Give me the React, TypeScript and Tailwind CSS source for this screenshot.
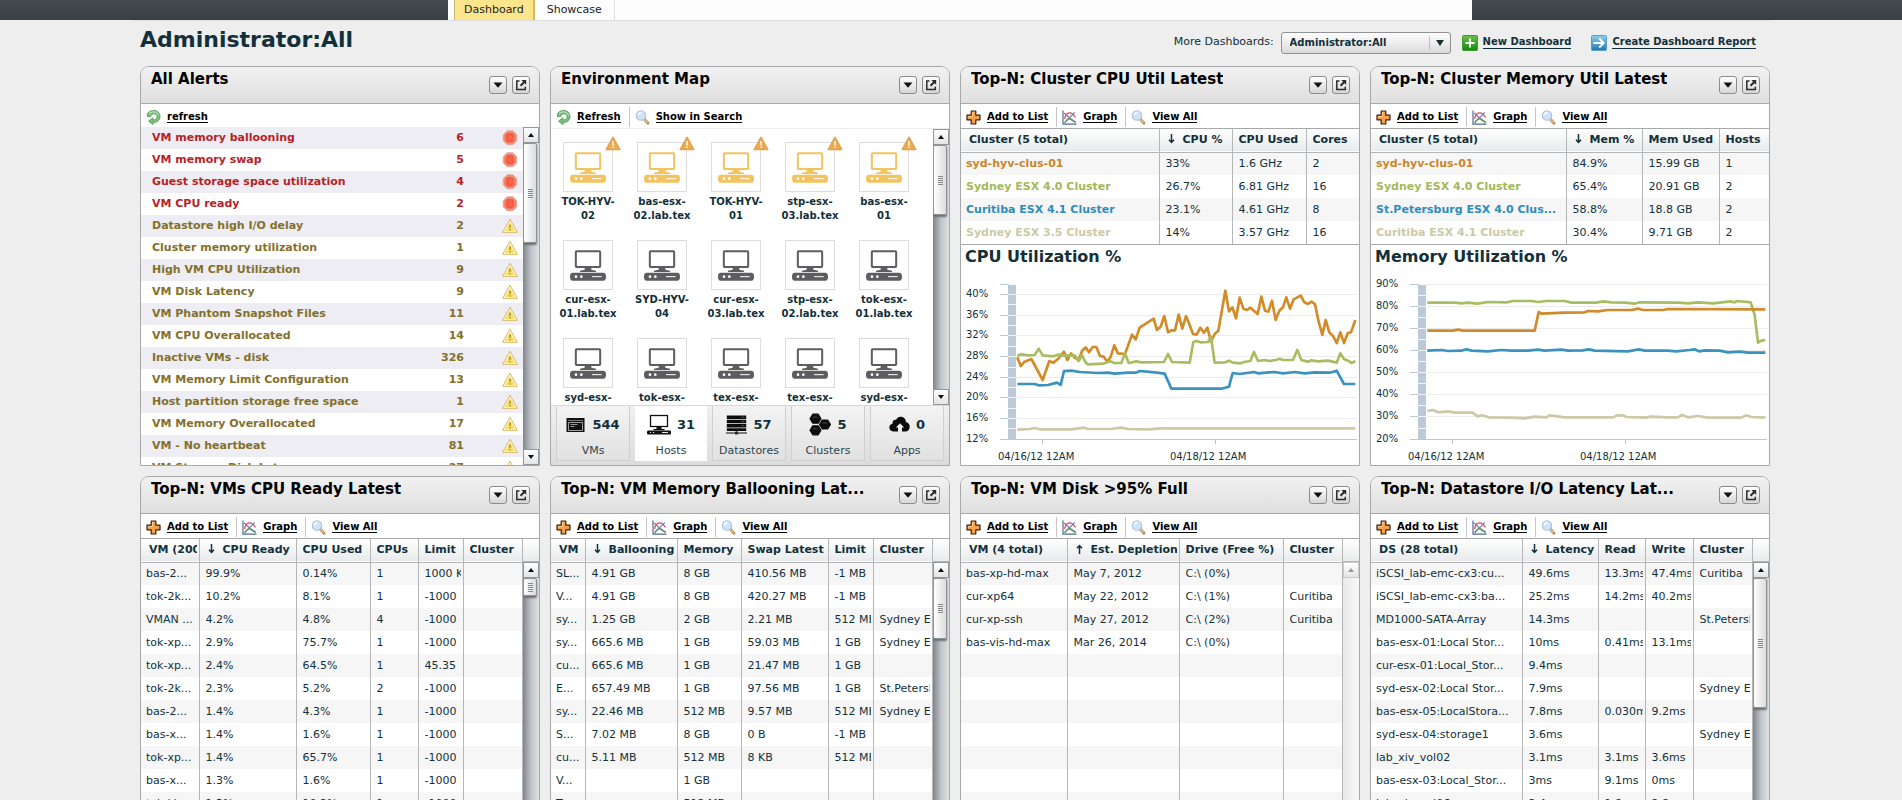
import React from "react";

/* ---------- Icons ---------- */

function RefreshIcon() {
  return (
    <svg width="15" height="15" viewBox="0 0 15 15" aria-hidden="true">
      <path
        d="M1.2 6.6 1.6 3.6C3 1.2 5.4.5 8 .5c3.4 0 6 2.600 6 6.100 0 3.500-2.400 5.600-5.600 5.900H6.900v2.200L2.600 11.200 6.900 7.800v2h1.200c1.700 0 3-1.300 3-3.100 0-1.700-1.300-2.900-3.100-2.900-1.800 0-2.800.9-3.200 2.800z"
        fill="#7cc07c"
        stroke="#4b9553"
        strokeWidth=".8"
        strokeLinejoin="round"
      />
      <path d="M3 3.600C4.300 2.300 6 1.800 8 1.900c2.300.1 4 1.500 4.500 3.600" fill="none" stroke="#c9ebc6" strokeWidth="1" />
    </svg>
  );
}

function SearchIcon() {
  return (
    <svg width="15" height="15" viewBox="0 0 15 15" aria-hidden="true">
      <path d="m9 8.800 4 4.500" stroke="#b98a5c" strokeWidth="2.800" strokeLinecap="round" />
      <path d="m9.300 9.100 3 3.300" stroke="#efc999" strokeWidth="1.100" strokeLinecap="round" />
      <circle cx="6" cy="5.500" r="4.700" fill="#cfe4f8" stroke="#a9c4e2" strokeWidth="1.100" />
      <path d="M3.300 5.200C3.600 3.500 4.800 2.600 6.500 2.700" stroke="#fff" strokeWidth="1.300" fill="none" />
    </svg>
  );
}

function PlusIcon() {
  return (
    <svg width="15" height="15" viewBox="0 0 15 15" aria-hidden="true">
      <path
        d="M5.200 1h4.600v4.200H14v4.600H9.800V14H5.200V9.800H1V5.200h4.200z"
        fill="#f6a04a"
        stroke="#3d1c05"
        strokeWidth="1.200"
        strokeLinejoin="round"
      />
      <path d="M6.500 6.500V2.400h1.200M2.400 7.700V6.500H6" stroke="#fcd09a" fill="none" />
    </svg>
  );
}

function GraphIcon() {
  return (
    <svg width="15" height="15" viewBox="0 0 15 15" aria-hidden="true">
      <path d="M1 .5v13.600h13.500" fill="none" stroke="#4f6a94" strokeWidth="1.200" />
      <path d="M2 3.200c3.500 1 5.500 7.800 11.800 8.600" fill="none" stroke="#9a7cb8" strokeWidth="1.400" />
      <path d="M2.600 8.800C4 2 9 .4 13.500 7.500" fill="none" stroke="#cf4f63" strokeWidth="1.300" />
      <path d="M2.500 12.800 12.800 2.300" fill="none" stroke="#7b79ad" strokeWidth="1.200" />
      <path d="M2.800 13C5 8 9 7 13.500 13" fill="none" stroke="#4fa05d" strokeWidth="1.200" />
    </svg>
  );
}

function CriticalIcon() {
  return (
    <svg width="16" height="16" viewBox="0 0 16 16" aria-hidden="true">
      <defs>
        <radialGradient id="critical">
          <stop offset="0" stopColor="#ff6a4a" />
          <stop offset=".65" stopColor="#f2583f" />
          <stop offset="1" stopColor="#ee8a76" />
        </radialGradient>
      </defs>
      <path d="M5.200.8h5.600l4 4v5.900l-4 4H5.200l-4-4V4.800z" fill="url(#critical)" stroke="#dcaba3" strokeWidth=".9" />
      <path d="M5.800 2.200h4.400l2.700 2.800v5.400l-2.700 2.800H5.800L3.100 10.400V5z" fill="none" stroke="#f7a593" strokeWidth=".9" />
    </svg>
  );
}

function WarningIcon() {
  return (
    <svg width="16" height="16" viewBox="0 0 16 16" aria-hidden="true">
      <path d="M8 1.200 15.400 14.300H.6z" fill="#fffbe6" stroke="#d8b565" strokeWidth="1" strokeLinejoin="round" />
      <path d="M8 4 13.200 13H2.800z" fill="#f7e06a" />
      <path d="M8 6.600v3.400M8 11v1.400" stroke="#b8902c" strokeWidth="1.500" />
    </svg>
  );
}

function BadgeIcon() {
  return (
    <svg width="16" height="15" viewBox="0 0 16 15" aria-hidden="true">
      <path d="M8 1.500 14.600 13.400H1.400z" fill="#efac4b" stroke="#e3a455" strokeWidth="1.800" strokeLinejoin="round" />
      <path d="M8 5v4.200M8 10.400v1.700" stroke="#fffaf0" strokeWidth="1.600" />
    </svg>
  );
}

function HostIcon({ color }: { color: string }) {
  return (
    <svg width="36" height="31" viewBox="0 0 108 93" aria-hidden="true">
      <rect x="17.500" y="4" width="73" height="47" rx="2" fill="#fff" stroke={color} strokeWidth="6" />
      <path d="M44 51h20v8l14 3v4H30v-4l14-3z" fill={color} />
      <path d="M8 68h92q8 0 8 12 0 12-8 12H8q-8 0-8-12 0-12 8-12z" fill={color} />
      <circle cx="18" cy="80" r="4" fill="#fff" />
      <circle cx="34" cy="80" r="4" fill="#fff" />
      <path d="M66 80h29" stroke="#fff" strokeWidth="3" />
    </svg>
  );
}

function VmsIcon() {
  return (
    <svg width="20" height="16" viewBox="0 0 20 16" aria-hidden="true">
      <rect x=".5" y="1" width="18" height="14" fill="#111" />
      <path d="M2 3.500h15" stroke="#777" />
      <path d="M2.500 5.500h14v8h-14z" fill="none" stroke="#ddd" strokeWidth=".7" />
      <path d="M4.500 7.500h7M4.500 9.500h4" stroke="#999" />
    </svg>
  );
}

function HostTabIcon() {
  return (
    <svg width="24" height="21" viewBox="0 0 24 21" aria-hidden="true">
      <rect x="3.500" y="1.500" width="17" height="11" fill="#fff" stroke="#111" strokeWidth="1.300" />
      <path d="M9.500 13h5v2h3v1.200h-11V15h3z" fill="#111" />
      <path d="M1 16.500h22q1 0 1 1.500v1q0 1.500-1 1.500H1q-1 0-1-1.500v-1q0-1.500 1-1.500z" fill="#111" />
      <path d="M3 18.500h1.200M6 18.500h1.200M15 18.500h6" stroke="#fff" strokeWidth=".9" />
    </svg>
  );
}

function DatastoresIcon() {
  return (
    <svg width="21" height="20" viewBox="0 0 21 20" aria-hidden="true">
      <path d="M.8.500h19.400v3.500H.8zM.8 4.800h19.400v3.500H.8zM.8 9.100h19.400v3.500H.8zM.8 13.300h19.400v2.700H.8z" fill="#0c0c0c" />
      <path d="M0 18h8M13 18h8M10.500 16v1" stroke="#555" strokeWidth="1.300" />
      <rect x="8.500" y="16.800" width="4" height="2.600" fill="#222" />
      <path d="M15.500 2.200h3M15.500 6.500h3M15.500 10.800h3" stroke="#666" strokeWidth=".8" />
    </svg>
  );
}

function ClustersIcon() {
  return (
    <svg width="22" height="23" viewBox="0 0 22 23" aria-hidden="true">
      <g fill="#0c0c0c" stroke="#0c0c0c" strokeWidth="1.200" strokeLinejoin="round">
        <path d="M3.800 1.200h5.400L12 5.700 9.200 10.200H3.800L1 5.700z" />
        <path d="M13.300 7h5.400l2.800 4.500-2.800 4.500h-5.400l-2.800-4.500z" />
        <path d="M3.800 12.800h5.400l2.800 4.500-2.800 4.500H3.800L1 17.300z" />
      </g>
      <path d="M4 4.200h4.500M4 15.800h4.500M13.500 10h4.500" stroke="#666" strokeWidth=".7" />
    </svg>
  );
}

function AppsIcon() {
  return (
    <svg width="21" height="17" viewBox="0 0 21 17" aria-hidden="true">
      <path
        d="M4.500 15.500C1.800 15.500.3 13.800.3 11.600c0-2 1.400-3.600 3.200-3.900C3.200 5 5 3.300 7.200 3.800 8 1.800 9.700.8 11.700.8c3 0 5.200 2.200 5.200 5.200 2.400.5 3.800 2.400 3.800 4.700 0 2.700-1.900 4.800-4.600 4.800h-3.100v-4h2.100L11 7.200l-4.100 4.300H9v4z"
        fill="#0c0c0c"
      />
    </svg>
  );
}

function TileIcon({ kind }: { kind: "new" | "report" }) {
  const isNew = kind === "new";
  return (
    <svg width="16" height="16" viewBox="0 0 16 16" aria-hidden="true">
      <defs>
        <linearGradient id={`tile-${kind}`} x1="0" y1="0" x2="0" y2="1">
          <stop offset="0" stopColor={isNew ? "#6cc04a" : "#8fd0f0"} />
          <stop offset="1" stopColor={isNew ? "#138a12" : "#2277ae"} />
        </linearGradient>
      </defs>
      <rect x=".5" y=".5" width="15" height="15" rx="1" fill={`url(#tile-${kind})`} stroke={isNew ? "#3c9a30" : "#5a9dc4"} />
      {isNew ? (
        <path d="M8 3.500v9M3.500 8h9" stroke="#fff" strokeWidth="1.800" />
      ) : (
        <path d="M2.500 8h9.500M8.300 3.500 12.700 8l-4.400 4.500" fill="none" stroke="#fff" strokeWidth="1.800" />
      )}
    </svg>
  );
}

/* ---------- Shared pieces ---------- */

function HeaderButton({ label, children }: { label: string; children: React.ReactNode }) {
  return (
    <button
      type="button"
      aria-label={label}
      className="flex size-[18px] items-center justify-center rounded-[3px] border border-[#8a8c8e] bg-linear-to-b from-white to-[#d6d6d6]"
    >
      {children}
    </button>
  );
}

function Panel({ title, children }: { title: string; children: React.ReactNode }) {
  return (
    <section className="flex h-[400px] min-w-0 flex-col overflow-hidden rounded-t-[9px] border border-[#a6a8aa] bg-white">
      <header className="flex h-[37px] shrink-0 items-start justify-between border-b border-[#a6a8aa] bg-linear-to-b from-[#f1f1f1] to-[#e0dfe0] pt-[3px] pr-[9px] pl-[10px]">
        <h2 className="truncate text-[15px] leading-[18px] font-bold text-black">{title}</h2>
        <div className="flex shrink-0 gap-[5px] pt-1.5">
          <HeaderButton label="Widget menu">
            <svg width="10" height="6" viewBox="0 0 10 6" aria-hidden="true">
              <path d="M.5.500h9L5 5.800z" fill="#111" />
            </svg>
          </HeaderButton>
          <HeaderButton label="Open in new window">
            <svg width="12" height="12" viewBox="0 0 12 12" aria-hidden="true">
              <path d="M4.500 2H1.800v8.500h8.500V7.800" fill="none" stroke="#2b2b2b" strokeWidth="1.500" />
              <path d="M6.300.9H11.200V5.800L9.500 4.200 6.200 7.500 4.800 6.100 8.100 2.700z" fill="#2b2b2b" />
            </svg>
          </HeaderButton>
        </div>
      </header>
      {children}
    </section>
  );
}

interface Tool {
  icon: React.ReactNode;
  label: string;
}

const listTools: Tool[] = [
  { icon: <PlusIcon />, label: "Add to List" },
  { icon: <GraphIcon />, label: "Graph" },
  { icon: <SearchIcon />, label: "View All" },
];

function Toolbar({ tools }: { tools: Tool[] }) {
  return (
    <div className="flex h-6 shrink-0 items-center pt-0.5">
      {tools.map((tool, i) => (
        <a
          key={tool.label}
          href="#"
          className={`flex h-5 items-center gap-[6px] pr-2 pl-[5px] text-[10px] leading-4 font-bold text-black ${
            i > 0 ? "border-l border-[#c4c6c8]" : ""
          }`}
        >
          {tool.icon}
          <span className="border-b border-black leading-[11px]">{tool.label}</span>
        </a>
      ))}
    </div>
  );
}

function Scrollbar({ thumb }: { thumb?: string }) {
  const active = Boolean(thumb);
  const cap = `flex h-4 w-full shrink-0 items-center justify-center border bg-linear-to-b from-white to-[#e4e4e4] ${
    active ? "border-[#94979a]" : "border-[#c9c9c9]"
  }`;
  const fill = active ? "#111" : "#999";
  return (
    <div
      className={`flex w-4 flex-1 flex-col overflow-hidden ${
        active ? "bg-linear-to-r from-[#7f858a] via-[#bfc5ca] to-[#dfe2e4]" : "bg-linear-to-r from-[#e9e9e9] to-[#f8f8f8]"
      }`}
    >
      <button type="button" aria-label="Scroll up" className={cap}>
        <svg width="6" height="4" viewBox="0 0 6 4" aria-hidden="true">
          <path d="M3 0 6 4H0z" fill={fill} />
        </svg>
      </button>
      <div className="flex flex-1 flex-col">
        {thumb && (
          <div
            className={`flex w-[14px] flex-col items-center justify-center gap-px rounded-[2px] border border-[#8f9396] bg-linear-to-r from-white to-[#dcdcdc] shadow-[0_2px_2px_#6a6f73] ${thumb}`}
          >
            <span className="h-px w-[5px] bg-[#888]" />
            <span className="h-px w-[5px] bg-[#888]" />
            <span className="h-px w-[5px] bg-[#888]" />
            <span className="h-px w-[5px] bg-[#888]" />
            <span className="h-px w-[5px] bg-[#888]" />
          </div>
        )}
      </div>
      <button type="button" aria-label="Scroll down" className={cap}>
        <svg width="6" height="4" viewBox="0 0 6 4" aria-hidden="true">
          <path d="M3 4 6 0H0z" fill={fill} />
        </svg>
      </button>
    </div>
  );
}

interface DataTableProps {
  columns: { label: string; width: string; sort?: "up" | "down" }[];
  rows: string[][];
  nameColors?: string[];
  thumb?: string;
  scroll?: boolean;
}

function SortArrow({ dir }: { dir: "up" | "down" }) {
  return (
    <svg width="7" height="10" viewBox="0 0 7 10" className="mr-2 ml-0.5 inline-block align-[-1px]" aria-hidden="true">
      <path
        d={dir === "down" ? "M3.500 0v8M1 5.800l2.500 2.700L6 5.800" : "M3.500 10V2M1 4.200l2.500-2.700L6 4.200"}
        fill="none"
        stroke="#12303a"
        strokeWidth="1.500"
      />
    </svg>
  );
}

function DataTable({ columns, rows, nameColors, thumb, scroll }: DataTableProps) {
  return (
    <div className={`flex min-h-0 border-t border-[#a6a8aa] ${scroll ? "flex-1" : "shrink-0 border-b"}`}>
      <div className="min-w-0 flex-1 overflow-hidden">
        <table className="w-full table-fixed border-collapse text-[11px] leading-[22px] text-[#12303a]">
          <colgroup>
            {columns.map((c) => (
              <col key={c.label} className={c.width} />
            ))}
          </colgroup>
          <thead>
            <tr className="h-[23px] border-b border-[#b4b6b8] bg-linear-to-b from-white to-[#e9eaeb]">
              {columns.map((c, i) => (
                <th
                  key={c.label}
                  scope="col"
                  className={`p-0 text-left font-bold ${i > 0 ? "border-l border-[#b4b6b8]" : ""}`}
                >
                  <div className={`mr-0.5 overflow-hidden whitespace-nowrap ${i > 0 ? "ml-[6px]" : "ml-2"}`}>
                    {c.sort && <SortArrow dir={c.sort} />}
                    {c.label}
                  </div>
                </th>
              ))}
            </tr>
          </thead>
          <tbody>
            {rows.map((row, r) => (
              <tr key={r} className={`h-[23px] ${r % 2 === 0 ? "bg-[#f6f6f6]" : "bg-white"}`}>
                {columns.map((c, i) => (
                  <td key={c.label} className={`p-0 ${i > 0 ? "border-l border-[#b4b6b8]" : ""}`}>
                    <div
                      className={`mr-0.5 h-[22px] overflow-hidden whitespace-nowrap ${i > 0 ? "ml-[6px]" : "ml-[5px]"} ${
                        i === 0 && nameColors ? `font-bold ${nameColors[r]}` : ""
                      }`}
                    >
                      {row[i]}
                    </div>
                  </td>
                ))}
              </tr>
            ))}
          </tbody>
        </table>
      </div>
      {scroll && (
        <div className="flex w-[17px] shrink-0 flex-col border-l border-[#b4b6b8]">
          <div className="h-[23px] shrink-0 border-b border-[#b4b6b8] bg-linear-to-b from-white to-[#e9eaeb]" />
          <Scrollbar thumb={thumb} />
        </div>
      )}
    </div>
  );
}

/* ---------- Charts ---------- */

interface ChartProps {
  title: string;
  ticks: { label: string; y: number }[];
  cells: number[];
  topTick?: boolean;
  series: { color: string; points: string }[];
}

function UtilizationChart({ title, ticks, cells, topTick, series }: ChartProps) {
  return (
    <>
      <h3 className="h-[22px] shrink-0 pl-1 text-[16px] leading-[23px] font-bold text-[#12303a]">{title}</h3>
      <svg viewBox="0 1 398 198" className="min-h-0 w-full flex-1" role="img" aria-label={title}>
        {ticks.map((t) => (
          <g key={t.label}>
            <path d={`M55 ${t.y}.5H396`} stroke="#ececec" />
            <path d={`M39 ${t.y}.5H48`} stroke="#b9c9d2" />
            <text x="5" y={t.y + 3} fontSize="10" fill="#12303a">
              {t.label}
            </text>
          </g>
        ))}
        {topTick && <path d="M39 18.500H48" stroke="#b9c9d2" />}
        <rect x="47" y="19" width="8" height="154" fill="#bccad8" />
        {cells.map((y) => (
          <path key={y} d={`M47 ${y}.500H55`} stroke="#f2f5f8" />
        ))}
        <path d="M39 173.500H396M81.500 173v5M254.500 173v5" fill="none" stroke="#b9c9d2" />
        <text x="37" y="194" fontSize="10" fill="#12303a">
          04/16/12 12AM
        </text>
        <text x="209" y="194" fontSize="10" fill="#12303a">
          04/18/12 12AM
        </text>
        <g transform="scale(.33333) translate(-19 -618)">
          {series.map((s) => (
            <polyline
              key={s.color}
              points={s.points}
              fill="none"
              stroke={s.color}
              strokeWidth="8"
              strokeLinejoin="round"
              strokeLinecap="butt"
            />
          ))}
        </g>
      </svg>
    </>
  );
}

const cpuSeries = [
  {
    color: "#d28b26",
    points:
      "188,892 198,918 210,905 230,897 240,915 264,960 284,903 296,908 310,897 328,875 338,900 349,880 360,893 372,900 382,873 393,862 403,877 414,861 425,861 436,888 447,890 458,905 468,890 479,856 490,880 511,882 532,824 543,838 555,803 597,776 607,810 618,800 629,768 640,817 650,811 661,811 672,764 683,806 694,768 705,795 715,822 726,824 737,803 748,818 758,803 769,845 780,822 791,812 812,692 823,754 833,742 844,775 855,713 866,746 877,750 887,743 909,762 920,710 931,752 941,755 952,722 963,780 974,752 985,742 995,712 1006,746 1017,718 1038,707 1049,727 1060,732 1071,725 1081,733 1092,785 1103,825 1113,780 1124,817 1135,828 1146,849 1157,817 1168,849 1179,820 1189,817 1202,780",
  },
  {
    color: "#a8bd61",
    points:
      "188,888 200,883 220,886 240,885 252,866 264,886 295,889 310,884 328,887 360,886 372,903 382,886 393,908 400,913 445,911 468,904 478,909 500,909 511,880 522,909 545,904 560,907 628,906 640,882 652,906 705,908 716,846 726,843 737,847 760,846 769,830 780,908 812,907 823,902 834,908 857,910 868,906 887,903 898,876 910,903 930,900 945,903 963,900 975,896 985,900 1015,900 1028,870 1040,900 1060,905 1070,901 1090,904 1120,902 1146,908 1157,880 1168,897 1180,902 1190,909 1202,904",
  },
  {
    color: "#3a92bf",
    points:
      "188,972 240,972 252,976 280,975 307,968 318,975 328,933 350,932 375,936 430,939 460,938 480,941 520,938 545,938 555,933 600,937 630,941 650,986 800,986 823,980 834,939 855,942 898,936 910,940 960,936 985,940 1020,936 1050,940 1080,937 1125,938 1146,932 1168,972 1202,972",
  },
  {
    color: "#cbc9a6",
    points:
      "188,1109 225,1107 240,1104 255,1108 350,1108 388,1103 400,1107 470,1107 497,1103 520,1107 580,1108 620,1105 1202,1105",
  },
];

const memorySeries = [
  {
    color: "#a8bd61",
    points:
      "188,728 270,728 290,730 310,728 338,731 370,726 425,727 445,723 500,723 520,726 545,723 600,723 620,728 695,728 715,724 740,727 780,728 810,731 825,727 940,728 970,730 1000,727 1045,730 1098,724 1110,727 1118,723 1158,727 1170,765 1180,848 1190,842 1202,840",
  },
  {
    color: "#cf8a2c",
    points:
      "188,812 265,812 280,809 295,812 510,812 522,756 530,761 600,758 660,757 670,753 700,754 730,750 800,750 822,746 835,750 895,750 910,747 1202,748",
  },
  {
    color: "#3a92bf",
    points:
      "188,872 230,870 250,873 290,872 305,868 322,872 370,874 410,870 440,872 490,872 520,869 540,872 590,869 610,872 655,871 672,868 690,872 790,874 822,868 840,872 910,872 935,874 975,870 990,868 1003,874 1020,871 1065,872 1090,877 1125,875 1150,878 1202,878",
  },
  {
    color: "#cbc9a6",
    points:
      "188,1053 205,1050 220,1057 252,1054 270,1058 325,1058 338,1069 352,1066 372,1072 440,1073 480,1075 510,1070 545,1072 555,1066 600,1072 745,1072 757,1066 775,1066 785,1071 840,1073 860,1070 910,1072 940,1072 952,1065 970,1072 1000,1068 1030,1073 1130,1073 1145,1066 1160,1071 1202,1073",
  },
];

/* ---------- Data ---------- */

const alerts: [string, number, "critical" | "warning"][] = [
  ["VM memory ballooning", 6, "critical"],
  ["VM memory swap", 5, "critical"],
  ["Guest storage space utilization", 4, "critical"],
  ["VM CPU ready", 2, "critical"],
  ["Datastore high I/O delay", 2, "warning"],
  ["Cluster memory utilization", 1, "warning"],
  ["High VM CPU Utilization", 9, "warning"],
  ["VM Disk Latency", 9, "warning"],
  ["VM Phantom Snapshot Files", 11, "warning"],
  ["VM CPU Overallocated", 14, "warning"],
  ["Inactive VMs - disk", 326, "warning"],
  ["VM Memory Limit Configuration", 13, "warning"],
  ["Host partition storage free space", 1, "warning"],
  ["VM Memory Overallocated", 17, "warning"],
  ["VM - No heartbeat", 81, "warning"],
  ["VM Storage Disk Latency", 27, "warning"],
];

const hosts: [string, string, boolean][] = [
  ["TOK-HYV-", "02", true],
  ["bas-esx-", "02.lab.tex", true],
  ["TOK-HYV-", "01", true],
  ["stp-esx-", "03.lab.tex", true],
  ["bas-esx-", "01", true],
  ["cur-esx-", "01.lab.tex", false],
  ["SYD-HYV-", "04", false],
  ["cur-esx-", "03.lab.tex", false],
  ["stp-esx-", "02.lab.tex", false],
  ["tok-esx-", "01.lab.tex", false],
  ["syd-esx-", "04.lab.tex", false],
  ["tok-esx-", "02.lab.tex", false],
  ["tex-esx-", "01.lab.tex", false],
  ["tex-esx-", "02.lab.tex", false],
  ["syd-esx-", "03.lab.tex", false],
];

const envTabs = [
  { label: "VMs", count: 544, icon: <VmsIcon /> },
  { label: "Hosts", count: 31, icon: <HostTabIcon /> },
  { label: "Datastores", count: 57, icon: <DatastoresIcon /> },
  { label: "Clusters", count: 5, icon: <ClustersIcon /> },
  { label: "Apps", count: 0, icon: <AppsIcon /> },
];

const nameColors = ["text-[#c9862b]", "text-[#a3b85a]", "text-[#2f8cbb]", "text-[#cbc9a6]"];

const cpuReady = [
  ["bas-2...", "99.9%", "0.14%", "1", "1000 KHz", ""],
  ["tok-2k...", "10.2%", "8.1%", "1", "-1000", ""],
  ["VMAN ...", "4.2%", "4.8%", "4", "-1000", ""],
  ["tok-xp...", "2.9%", "75.7%", "1", "-1000", ""],
  ["tok-xp...", "2.4%", "64.5%", "1", "45.35", ""],
  ["tok-2k...", "2.3%", "5.2%", "2", "-1000", ""],
  ["bas-2...", "1.4%", "4.3%", "1", "-1000", ""],
  ["bas-x...", "1.4%", "1.6%", "1", "-1000", ""],
  ["tok-xp...", "1.4%", "65.7%", "1", "-1000", ""],
  ["bas-x...", "1.3%", "1.6%", "1", "-1000", ""],
  ["tok-ki...", "1.3%", "10.2%", "1", "-1000", ""],
  ["tok-xp...", "1.2%", "3.1%", "1", "-1000", ""],
  ["bas-x...", "1.2%", "2.4%", "1", "-1000", ""],
];

const ballooning = [
  ["SL...", "4.91 GB", "8 GB", "410.56 MB", "-1 MB", ""],
  ["V...", "4.91 GB", "8 GB", "420.27 MB", "-1 MB", ""],
  ["sy...", "1.25 GB", "2 GB", "2.21 MB", "512 MB", "Sydney ESX 4.0 Cluster"],
  ["sy...", "665.6 MB", "1 GB", "59.03 MB", "1 GB", "Sydney ESX 4.0 Cluster"],
  ["cu...", "665.6 MB", "1 GB", "21.47 MB", "1 GB", ""],
  ["E...", "657.49 MB", "1 GB", "97.56 MB", "1 GB", "St.Petersburg ESX 4.0"],
  ["sy...", "22.46 MB", "512 MB", "9.57 MB", "512 MB", "Sydney ESX 4.0 Cluster"],
  ["S...", "7.02 MB", "8 GB", "0 B", "-1 MB", ""],
  ["cu...", "5.11 MB", "512 MB", "8 KB", "512 MB", ""],
  ["V...", "", "1 GB", "", "", ""],
  ["T...", "", "512 MB", "", "", ""],
  ["V...", "", "1 GB", "", "", ""],
  ["T...", "", "1 GB", "", "", ""],
];

const diskFull = [
  ["bas-xp-hd-max", "May 7, 2012", "C:\\ (0%)", ""],
  ["cur-xp64", "May 22, 2012", "C:\\ (1%)", "Curitiba"],
  ["cur-xp-ssh", "May 27, 2012", "C:\\ (2%)", "Curitiba"],
  ["bas-vis-hd-max", "Mar 26, 2014", "C:\\ (0%)", ""],
  ...Array.from({ length: 9 }, () => ["", "", "", ""]),
];

const datastores = [
  ["iSCSI_lab-emc-cx3:cu...", "49.6ms", "13.3ms", "47.4ms", "Curitiba"],
  ["iSCSI_lab-emc-cx3:ba...", "25.2ms", "14.2ms", "40.2ms", ""],
  ["MD1000-SATA-Array", "14.3ms", "", "", "St.Petersburg"],
  ["bas-esx-01:Local Stor...", "10ms", "0.41ms", "13.1ms", ""],
  ["cur-esx-01:Local_Stor...", "9.4ms", "", "", ""],
  ["syd-esx-02:Local Stor...", "7.9ms", "", "", "Sydney ESX 4.0 Cluster"],
  ["bas-esx-05:LocalStora...", "7.8ms", "0.030ms", "9.2ms", ""],
  ["syd-esx-04:storage1", "3.6ms", "", "", "Sydney ESX 3.5 Cluster"],
  ["lab_xiv_vol02", "3.1ms", "3.1ms", "3.6ms", ""],
  ["bas-esx-03:Local_Stor...", "3ms", "9.1ms", "0ms", ""],
  ["lab_xiv_vol06", "2.4ms", "1.8ms", "2.8ms", ""],
  ["lab_xiv_vol01", "2.2ms", "1.5ms", "2.6ms", ""],
  ["lab_xiv_vol03", "2.1ms", "1.4ms", "2.5ms", ""],
];

/* ---------- Widgets ---------- */

function AlertsPanel() {
  return (
    <Panel title="All Alerts">
      <div className="h-[23px] shrink-0">
        <Toolbar tools={[{ icon: <RefreshIcon />, label: "refresh" }]} />
      </div>
      <div className="flex min-h-0 flex-1">
        <ul className="min-w-0 flex-1 overflow-hidden">
          {alerts.map(([name, count, level], i) => (
            <li
              key={name}
              className={`flex h-[22px] items-center pr-[5px] pl-[11px] text-[11px] font-bold ${
                i % 2 === 0 ? "bg-[#ededf3]" : "bg-white"
              } ${level === "critical" ? "text-[#b81f27]" : "text-[#84702a]"}`}
            >
              <span className="flex-1 truncate leading-[22px]">{name}</span>
              <span className="mr-[38px]">{count}</span>
              {level === "critical" ? <CriticalIcon /> : <WarningIcon />}
            </li>
          ))}
        </ul>
        <div className="flex w-4 shrink-0 flex-col">
          <Scrollbar thumb="h-[100px]" />
        </div>
      </div>
    </Panel>
  );
}

function EnvironmentPanel() {
  return (
    <Panel title="Environment Map">
      <Toolbar
        tools={[
          { icon: <RefreshIcon />, label: "Refresh" },
          { icon: <SearchIcon />, label: "Show in Search" },
        ]}
      />
      <div className="flex min-h-0 flex-1 border-t border-[#ececec]">
        <div className="grid min-w-0 flex-1 auto-rows-[98px] grid-cols-[repeat(5,74px)] overflow-hidden pt-[13px]">
          {hosts.map(([first, second, warn], i) => (
            <div key={i} className="flex flex-col items-center text-center">
              <div className="relative flex size-[50px] items-center justify-center border border-[#dcdcdc]">
                <HostIcon color={warn ? "#f2c35e" : "#5d5d61"} />
                {warn && (
                  <span className="absolute -top-[7px] -right-[9px]">
                    <BadgeIcon />
                  </span>
                )}
              </div>
              <p className="pt-[3px] text-[10px] leading-[14px] font-bold text-[#12303a]">
                {first}
                <br />
                {second}
              </p>
            </div>
          ))}
        </div>
        <div className="flex w-4 shrink-0 flex-col">
          <Scrollbar thumb="h-[70px]" />
        </div>
      </div>
      <div className="flex h-[60px] shrink-0 gap-[5px] border-t border-[#d8d8d8] bg-linear-to-b from-[#f0f0f0] to-[#dddcdd] px-[5px] pb-[4px]">
        {envTabs.map((tab) => (
          <button
            key={tab.label}
            type="button"
            className={`flex flex-1 flex-col items-center ${
              tab.label === "Hosts"
                ? "bg-white"
                : "border-x border-b border-[#cfcfcf] bg-linear-to-b from-[#f3f3f3] to-[#e2e1e2]"
            }`}
          >
            <span className="flex h-[37px] items-center gap-[6px] text-[13px] font-bold text-[#12303a]">
              {tab.icon}
              {tab.count}
            </span>
            <span className="text-[11px] leading-4 text-[#2c454e]">{tab.label}</span>
          </button>
        ))}
      </div>
    </Panel>
  );
}

export default function App() {
  return (
    <div className="h-screen overflow-hidden bg-[#eeeeee] font-['DejaVu_Sans',Verdana,sans-serif] text-[#12303a]">
      <div className="h-5 bg-linear-to-b from-[#434b4f] to-[#384044] pl-[18px]">
        <nav className="mx-auto flex h-full max-w-[1024px] items-stretch bg-[#fdfdfd] pl-1.5 text-[11px] leading-5 text-[#222]">
          <a href="#" className="border-r-2 border-l border-r-[#d9b95e] border-l-[#c9b77a] bg-[#fde58c] px-[9px]">
            Dashboard
          </a>
          <a href="#" className="border-r border-[#dedede] px-3">
            Showcase
          </a>
        </nav>
      </div>
      <main className="mx-auto max-w-[1638px] border-t border-[#dedede] pl-2">
        <div className="flex h-[45px] items-center justify-between pr-[14px]">
          <h1 className="pb-2 text-[22px] leading-6 font-bold text-[#12303a]">Administrator:All</h1>
          <div className="flex items-center pb-0.5 text-[10px]">
            <label htmlFor="dashboards" className="pr-[7px] text-[11px]">
              More Dashboards:
            </label>
            <div className="relative">
              <select
                id="dashboards"
                className="block h-[22px] w-[170px] appearance-none rounded-[3px] border border-[#8f9396] bg-linear-to-b from-white to-[#dadada] pl-2 text-[10px] font-bold text-[#12303a]"
              >
                <option>Administrator:All</option>
              </select>
              <span className="pointer-events-none absolute top-1 right-[7px] flex h-[14px] items-center border-l border-[#c0c0c0] pl-[6px]">
                <svg width="8" height="6" viewBox="0 0 8 6" aria-hidden="true">
                  <path d="M0 0h8L4 6z" fill="#12303a" />
                </svg>
              </span>
            </div>
            <a href="#" className="flex items-center gap-[5px] pl-[11px] font-bold">
              <TileIcon kind="new" />
              <span className="border-b border-[#12303a] leading-3">New Dashboard</span>
            </a>
            <a href="#" className="flex items-center gap-[5px] pl-5 font-bold">
              <TileIcon kind="report" />
              <span className="border-b border-[#12303a] leading-3">Create Dashboard Report</span>
            </a>
          </div>
        </div>
        <div className="grid grid-cols-4 gap-[10px]">
          <AlertsPanel />
          <EnvironmentPanel />
          <Panel title="Top-N: Cluster CPU Util Latest">
            <Toolbar tools={listTools} />
            <DataTable
              columns={[
                { label: "Cluster (5 total)", width: "w-auto" },
                { label: "CPU %", width: "w-[73px]", sort: "down" },
                { label: "CPU Used", width: "w-[74px]" },
                { label: "Cores", width: "w-[53px]" },
              ]}
              rows={[
                ["syd-hyv-clus-01", "33%", "1.6 GHz", "2"],
                ["Sydney ESX 4.0 Cluster", "26.7%", "6.81 GHz", "16"],
                ["Curitiba ESX 4.1 Cluster", "23.1%", "4.61 GHz", "8"],
                ["Sydney ESX 3.5 Cluster", "14%", "3.57 GHz", "16"],
              ]}
              nameColors={nameColors}
            />
            <UtilizationChart
              title="CPU Utilization %"
              topTick
              ticks={[
                { label: "40%", y: 28 },
                { label: "36%", y: 49 },
                { label: "32%", y: 69 },
                { label: "28%", y: 90 },
                { label: "24%", y: 111 },
                { label: "20%", y: 131 },
                { label: "16%", y: 152 },
                { label: "12%", y: 173 },
              ]}
              cells={[28, 38, 49, 59, 69, 80, 90, 101, 111, 121, 131, 142, 152, 162]}
              series={cpuSeries}
            />
          </Panel>
          <Panel title="Top-N: Cluster Memory Util Latest">
            <Toolbar tools={listTools} />
            <DataTable
              columns={[
                { label: "Cluster (5 total)", width: "w-auto" },
                { label: "Mem %", width: "w-[76px]", sort: "down" },
                { label: "Mem Used", width: "w-[77px]" },
                { label: "Hosts", width: "w-[50px]" },
              ]}
              rows={[
                ["syd-hyv-clus-01", "84.9%", "15.99 GB", "1"],
                ["Sydney ESX 4.0 Cluster", "65.4%", "20.91 GB", "2"],
                ["St.Petersburg ESX 4.0 Clus...", "58.8%", "18.8 GB", "2"],
                ["Curitiba ESX 4.1 Cluster", "30.4%", "9.71 GB", "2"],
              ]}
              nameColors={nameColors}
            />
            <UtilizationChart
              title="Memory Utilization %"
              ticks={[
                { label: "90%", y: 18 },
                { label: "80%", y: 40 },
                { label: "70%", y: 62 },
                { label: "60%", y: 84 },
                { label: "50%", y: 106 },
                { label: "40%", y: 128 },
                { label: "30%", y: 150 },
                { label: "20%", y: 173 },
              ]}
              cells={[29, 40, 51, 62, 73, 84, 95, 106, 117, 128, 139, 150, 162]}
              series={memorySeries}
            />
          </Panel>
          <Panel title="Top-N: VMs CPU Ready Latest">
            <Toolbar tools={listTools} />
            <DataTable
              scroll
              thumb="h-[18px]"
              columns={[
                { label: "VM (200 total)", width: "w-auto" },
                { label: "CPU Ready", width: "w-[97px]", sort: "down" },
                { label: "CPU Used", width: "w-[74px]" },
                { label: "CPUs", width: "w-[48px]" },
                { label: "Limit", width: "w-[45px]" },
                { label: "Cluster", width: "w-[59px]" },
              ]}
              rows={cpuReady}
            />
          </Panel>
          <Panel title="Top-N: VM Memory Ballooning Lat...">
            <Toolbar tools={listTools} />
            <DataTable
              scroll
              thumb="h-[61px]"
              columns={[
                { label: "VM (25 total)", width: "w-auto" },
                { label: "Ballooning", width: "w-[92px]", sort: "down" },
                { label: "Memory", width: "w-[64px]" },
                { label: "Swap Latest", width: "w-[87px]" },
                { label: "Limit", width: "w-[45px]" },
                { label: "Cluster", width: "w-[59px]" },
              ]}
              rows={ballooning}
            />
          </Panel>
          <Panel title="Top-N: VM Disk >95% Full">
            <Toolbar tools={listTools} />
            <DataTable
              scroll
              columns={[
                { label: "VM (4 total)", width: "w-auto" },
                { label: "Est. Depletion", width: "w-[112px]", sort: "up" },
                { label: "Drive (Free %)", width: "w-[104px]" },
                { label: "Cluster", width: "w-[59px]" },
              ]}
              rows={diskFull}
            />
          </Panel>
          <Panel title="Top-N: Datastore I/O Latency Lat...">
            <Toolbar tools={listTools} />
            <DataTable
              scroll
              thumb="h-[130px]"
              columns={[
                { label: "DS (28 total)", width: "w-auto" },
                { label: "Latency", width: "w-[76px]", sort: "down" },
                { label: "Read", width: "w-[47px]" },
                { label: "Write", width: "w-[48px]" },
                { label: "Cluster", width: "w-[59px]" },
              ]}
              rows={datastores}
            />
          </Panel>
        </div>
      </main>
    </div>
  );
}
